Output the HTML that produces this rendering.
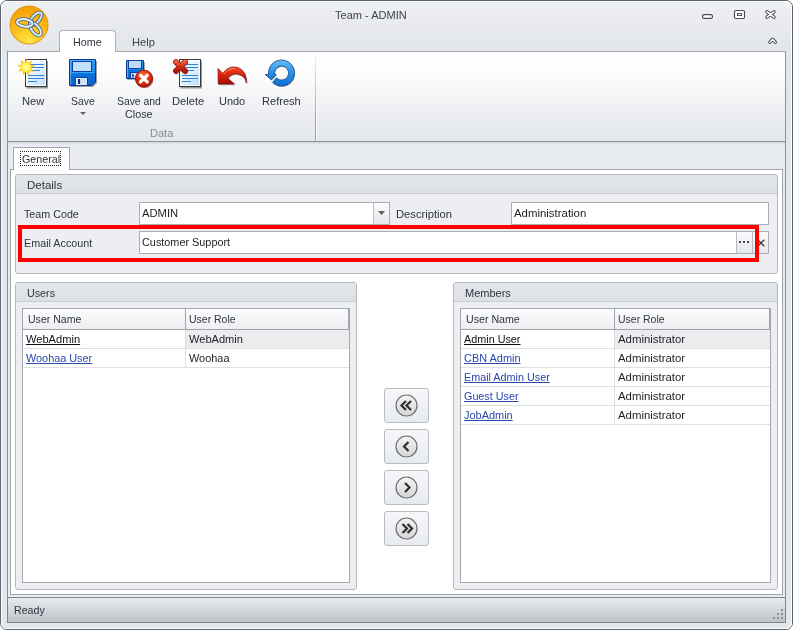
<!DOCTYPE html>
<html><head><meta charset="utf-8"><title>Team - ADMIN</title>
<style>
html,body{margin:0;padding:0;}
body{width:793px;height:630px;position:relative;overflow:hidden;background:#fff;font:11.5px/14px "Liberation Sans",sans-serif;}
div,span,svg{position:absolute;box-sizing:border-box;}
.t{white-space:pre;transform-origin:0 0;font:11.5px/14px "Liberation Sans",sans-serif;text-decoration-thickness:1px;text-underline-offset:1px;}
#win{left:0;top:0;width:793px;height:630px;border:1px solid #5b636e;border-radius:7px;background:linear-gradient(#eff0f2 0,#e9ebee 20px,#e2e5e9 50px,#e3e6ea 100%);}
#winhl{left:1px;top:1px;width:791px;height:628px;border:1px solid #fff;border-radius:6px;}
#frame{left:7px;top:51px;width:779px;height:572px;border:1px solid #8a8f97;border-top:none;background:#e8ebef;}
#ribbon{left:7px;top:51px;width:779px;height:91px;border:1px solid #8d9299;border-top-color:#a4a9b0;background:linear-gradient(#ffffff 0,#fbfbfc 30%,#eceef1 70%,#e4e7eb 100%);}
#ribsh{left:8px;top:142px;width:777px;height:3px;background:linear-gradient(#d4d7dc,#e8ebef);}
#tabhome{left:59px;top:30px;width:57px;height:22px;border:1px solid #adb1b8;border-bottom:none;border-radius:4px 4px 0 0;background:#fff;}
#grpsep{left:315px;top:52px;width:2px;height:89px;background:linear-gradient(90deg,#9a9ea6 0,#9a9ea6 50%,#fff 50%,#fff 100%);-webkit-mask-image:linear-gradient(rgba(0,0,0,0.05),rgba(0,0,0,0.5) 35%,#000 80%);mask-image:linear-gradient(rgba(0,0,0,0.05),rgba(0,0,0,0.5) 35%,#000 80%);}
#status{left:7px;top:597px;width:779px;height:26px;border:1px solid #7f848c;background:linear-gradient(#e9ebee 0,#d8dbdf 40%,#bfc2c7 100%);}
#page{left:10px;top:169px;width:773px;height:426px;border:1px solid #a0a5ac;background:#fff;}
#tabgen{left:13px;top:147px;width:57px;height:23px;border:1px solid #a0a5ac;border-bottom:none;background:#fff;}
#focus{left:20px;top:151px;width:41px;height:15px;border:1px dotted #222;}
.grp{border:1px solid #b3b7be;border-radius:3px;background:#eceef2;}
.grp .hd{left:0;top:0;right:0;height:19px;border-bottom:1px solid #c9ccd2;background:linear-gradient(#e3e6ea,#dcdfe4);border-radius:2px 2px 0 0;}
.inp{border:1px solid #a9adb4;background:#fff;}
.btn{border-left:1px solid #b9bdc3;background:linear-gradient(#fafbfc,#e4e7eb);}
#red{left:18px;top:225px;width:741px;height:37px;border:4px solid #ff0000;}
.grid{border:1px solid #a3a7ae;background:#fff;}
.gh{left:0;top:0;right:0;height:21px;background:linear-gradient(#fbfcfc,#eceef1);border-bottom:1px solid #9ea2a9;}
.row{left:0;right:0;height:19px;border-bottom:1px solid #dcdfe3;}
.vsep{top:21px;width:1px;background:#dcdfe3;}
.hsep{top:0;width:1px;height:21px;background:#9ea2a9;}
.sel{background:#ebecee;}
.mv{left:384px;width:45px;height:35px;border:1px solid #b7bbc2;border-radius:3px;background:linear-gradient(#f6f7f9,#e8ebee);}

</style></head>
<body>
<div id="win"></div>
<div id="winhl"></div>
<div id="frame"></div>
<div id="ribbon"></div>
<div id="ribsh"></div>
<div id="tabhome"></div>
<div id="grpsep"></div>
<div id="status"></div>
<div id="tabgen"></div>
<div id="page"></div>
<div id="tabgen2" style="left:14px;top:169px;width:55px;height:1px;background:#fff"></div>
<div id="focus"></div>

<!-- Details group -->
<div class="grp" style="left:15px;top:174px;width:763px;height:100px"><div class="hd"></div></div>
<div class="inp" style="left:139px;top:202px;width:251px;height:23px"><div class="btn" style="right:0;top:0;width:16px;height:21px"></div></div>
<svg style="left:378px;top:211px" width="7" height="4" viewBox="0 0 7 4"><path d="M0 0H7L3.5 4Z" fill="#5a5f68"/></svg>
<div class="inp" style="left:511px;top:202px;width:258px;height:23px"></div>
<div class="inp" style="left:139px;top:231px;width:630px;height:23px">
  <div class="btn" style="left:596px;top:0;width:16px;height:21px"></div>
  <div class="btn" style="left:612px;top:0;width:16px;height:21px"></div>
</div>
<svg style="left:738px;top:241px" width="11" height="2" viewBox="0 0 11 2"><rect x="1" width="2" height="2" fill="#444"/><rect x="5" width="2" height="2" fill="#444"/><rect x="9" width="2" height="2" fill="#444"/></svg>
<svg style="left:756.8px;top:238.6px" width="8" height="8" viewBox="0 0 8 8"><path d="M0.7 0.7L7.3 7.3M7.3 0.7L0.7 7.3" stroke="#3a3a3a" stroke-width="1.3" fill="none"/></svg>
<div id="red"></div>

<!-- Users group -->
<div class="grp" style="left:15px;top:282px;width:342px;height:308px"><div class="hd"></div></div>
<div class="grid" style="left:22px;top:308px;width:328px;height:275px">
  <div class="gh"></div>
  <div class="row" style="top:21px"><div class="sel" style="left:163px;top:0;right:0;height:18px"></div></div>
  <div class="row" style="top:40px"></div>
  <div class="vsep" style="left:162px;height:38px"></div>
  <div class="hsep" style="left:162px"></div>
  <div class="hsep" style="right:0"></div>
</div>

<!-- Members group -->
<div class="grp" style="left:453px;top:282px;width:325px;height:308px"><div class="hd"></div></div>
<div class="grid" style="left:460px;top:308px;width:311px;height:275px">
  <div class="gh"></div>
  <div class="row" style="top:21px"><div class="sel" style="left:154px;top:0;right:0;height:18px"></div></div>
  <div class="row" style="top:40px"></div>
  <div class="row" style="top:59px"></div>
  <div class="row" style="top:78px"></div>
  <div class="row" style="top:97px"></div>
  <div class="vsep" style="left:153px;height:95px"></div>
  <div class="hsep" style="left:153px"></div>
  <div class="hsep" style="right:0"></div>
</div>

<!-- move buttons -->
<div class="mv" style="top:388px"></div>
<div class="mv" style="top:429px"></div>
<div class="mv" style="top:470px"></div>
<div class="mv" style="top:511px"></div>
<!-- app logo -->
<svg style="left:9px;top:5px" width="40" height="40" viewBox="0 0 40 40">
  <defs>
    <radialGradient id="lg" cx="0.5" cy="0.95" r="0.95"><stop offset="0" stop-color="#ffe848"/><stop offset="0.4" stop-color="#fdc620"/><stop offset="0.8" stop-color="#f8a80c"/><stop offset="1" stop-color="#f49c08"/></radialGradient>
    <linearGradient id="lp" x1="0" y1="0" x2="0" y2="1"><stop offset="0" stop-color="#f4faff"/><stop offset="1" stop-color="#9cc7ee"/></linearGradient>
  </defs>
  <circle cx="20" cy="20" r="19" fill="url(#lg)" stroke="#ea8b14" stroke-width="1"/>
  <g fill="none" transform="translate(22.3,18.8)">
    <ellipse cx="-6.6" cy="0" rx="7.8" ry="3.7" transform="rotate(132)" stroke="#4a617c" stroke-width="3.6"/>
    <ellipse cx="-6.6" cy="0" rx="7.8" ry="3.7" transform="rotate(132)" stroke="#cfe5f8" stroke-width="2"/>
    <ellipse cx="-6.6" cy="0" rx="7.8" ry="3.7" transform="rotate(-128)" stroke="#4a617c" stroke-width="3.6"/>
    <ellipse cx="-6.6" cy="0" rx="7.8" ry="3.7" transform="rotate(-128)" stroke="#d8ebfa" stroke-width="2"/>
    <ellipse cx="-6.6" cy="0" rx="7.8" ry="3.7" transform="rotate(8)" stroke="#4a617c" stroke-width="3.6"/>
    <ellipse cx="-6.6" cy="0" rx="7.8" ry="3.7" transform="rotate(8)" stroke="#e0f0fc" stroke-width="2"/>
  </g>
</svg>

<!-- New -->
<svg style="left:16px;top:56px" width="36" height="34" viewBox="0 0 36 34">
  <defs>
    <linearGradient id="pg" x1="0" y1="0" x2="1" y2="1"><stop offset="0" stop-color="#ffffff"/><stop offset="0.45" stop-color="#e6f3fd"/><stop offset="1" stop-color="#b9dcfa"/></linearGradient>
    <radialGradient id="sun"><stop offset="0" stop-color="#fffcc0"/><stop offset="0.45" stop-color="#fff250"/><stop offset="0.8" stop-color="#fbd020"/><stop offset="1" stop-color="#f5b800"/></radialGradient>
    <filter id="sh" x="-20%" y="-20%" width="150%" height="150%"><feGaussianBlur stdDeviation="0.7"/></filter>
  </defs>
  <rect x="10.5" y="5" width="21.5" height="27.5" fill="#444" opacity="0.55" filter="url(#sh)"/>
  <rect x="9.5" y="3.5" width="21" height="27" fill="url(#pg)" stroke="#3a3a3a" stroke-width="1"/>
  <rect x="10.5" y="4.5" width="19" height="25" fill="none" stroke="#fff" stroke-width="1" opacity="0.8"/>
  <g stroke="#2f86d8" stroke-width="1">
    <path d="M14 8.5H28M14 11.5H28M14 14.5H24M12 19.5H28M12 22.5H28M12 25.5H21"/>
  </g>
  <g transform="translate(0.7,0.6)"><path fill="url(#sun)" stroke="#f2b200" stroke-width="0.4" d="M9.4 2.6L11.0 6.6L14.8 4.4L13.6 8.4L17.8 9.2L14.2 11.4L16.6 15.0L12.6 14.2L12.0 18.6L9.4 15.2L6.6 18.4L6.2 14.0L1.8 14.6L4.6 11.2L1.0 8.8L5.2 8.2L4.2 3.8L7.8 6.4Z"/></g>
</svg>

<!-- Save -->
<svg style="left:66px;top:56px" width="34" height="34" viewBox="0 0 34 34">
  <defs>
    <linearGradient id="fl" x1="0" y1="0" x2="0" y2="1"><stop offset="0" stop-color="#2fa0f6"/><stop offset="0.5" stop-color="#1486ea"/><stop offset="0.55" stop-color="#0a72dc"/><stop offset="1" stop-color="#0a62cc"/></linearGradient>
  </defs>
  <path d="M4.5 5H31V27L27 31H4.5Z" fill="#444" opacity="0.5" filter="url(#sh)"/>
  <path d="M3.5 3.5H29.5V26L26 29.5H3.5Z" fill="url(#fl)" stroke="#0a3392" stroke-width="1"/>
  <path d="M4.5 28.5V4.5H28.5" fill="none" stroke="#5cb8fa" stroke-width="1" opacity="0.8"/>
  <rect x="6.5" y="5.5" width="19" height="10" fill="#c2e0fb" stroke="#0a3fa6" stroke-width="1"/>
  <path d="M5 16.5H28" stroke="#4fb0f8" stroke-width="1" opacity="0.7"/>
  <rect x="9.5" y="21.5" width="12" height="8" fill="#cde4fa" stroke="#0a3fa6" stroke-width="1"/>
  <rect x="10" y="22" width="5" height="7" fill="#f4faff"/>
  <rect x="11.9" y="23" width="2.3" height="5" fill="#0b2a86"/>
</svg>
<svg style="left:80px;top:112px" width="6" height="3" viewBox="0 0 6 3"><path d="M0 0H6L3 3Z" fill="#5a5f68"/></svg>

<!-- Save and Close -->
<svg style="left:122px;top:56px" width="36" height="36" viewBox="0 0 36 36">
  <defs>
    <radialGradient id="rc" cx="0.45" cy="0.3" r="0.75"><stop offset="0" stop-color="#ff6a3a"/><stop offset="0.55" stop-color="#e02c0c"/><stop offset="1" stop-color="#a81004"/></radialGradient>
  </defs>
  <path d="M5.5 6H23V24H5.5Z" fill="#444" opacity="0.45" filter="url(#sh)"/>
  <path d="M4.5 4.5H21.5V22.5H4.5Z" fill="url(#fl)" stroke="#0a3392" stroke-width="1"/>
  <path d="M5.5 21.5V5.5H20.5" fill="none" stroke="#5cb8fa" stroke-width="1" opacity="0.8"/>
  <rect x="6.5" y="4.5" width="13" height="8" fill="#bedcf9" stroke="#0a3fa6" stroke-width="1"/>
  <rect x="8.5" y="16.5" width="9" height="6" fill="#cde4fa" stroke="#0a3fa6" stroke-width="1"/>
  <rect x="10.2" y="18" width="1.4" height="3.6" fill="#0b2a86"/>
  <circle cx="22.6" cy="23.3" r="9" fill="#555" opacity="0.35" filter="url(#sh)"/>
  <circle cx="22" cy="22.7" r="8.6" fill="url(#rc)" stroke="#981408" stroke-width="0.9"/>
  <path d="M18.6 19.3L25.2 25.9M25.2 19.3L18.6 25.9" stroke="#fff" stroke-width="3.3" stroke-linecap="round"/>
</svg>

<!-- Delete -->
<svg style="left:170px;top:56px" width="36" height="34" viewBox="0 0 36 34">
  <defs>
    <linearGradient id="rx" x1="0" y1="0" x2="0" y2="1"><stop offset="0" stop-color="#ee6236"/><stop offset="0.5" stop-color="#d02c14"/><stop offset="1" stop-color="#b01608"/></linearGradient>
  </defs>
  <rect x="10.5" y="5" width="21.5" height="27.5" fill="#444" opacity="0.55" filter="url(#sh)"/>
  <rect x="9.5" y="3.5" width="21" height="27" fill="url(#pg)" stroke="#3a3a3a" stroke-width="1"/>
  <rect x="10.5" y="4.5" width="19" height="25" fill="none" stroke="#fff" stroke-width="1" opacity="0.8"/>
  <g stroke="#2f86d8" stroke-width="1">
    <path d="M16 8.5H28M16 11.5H28M16 14.5H24M12 19.5H28M12 22.5H28M12 25.5H21"/>
  </g>
  <path d="M6 6L15 15M15 6L6 15" stroke="#555" stroke-width="5.6" stroke-linecap="round" opacity="0.3" filter="url(#sh)" transform="translate(0.6,0.8)"/>
  <path d="M5.9 5.9L15.1 15.1M15.1 5.9L5.9 15.1" stroke="#8e1208" stroke-width="5.7" stroke-linecap="round"/>
  <path d="M5.9 5.9L15.1 15.1M15.1 5.9L5.9 15.1" stroke="url(#rx)" stroke-width="4.3" stroke-linecap="round"/>
</svg>

<!-- Undo -->
<svg style="left:216px;top:56px" width="34" height="34" viewBox="0 0 34 34">
  <defs>
    <linearGradient id="un" x1="0" y1="0" x2="0" y2="1"><stop offset="0" stop-color="#f64a28"/><stop offset="0.45" stop-color="#e02408"/><stop offset="1" stop-color="#a00c04"/></linearGradient>
  </defs>
  <path d="M2 12.5L2.2 28H18.5L11.5 22C15 17.2 22 16 27.5 21C29.5 23 30.3 25.5 30.6 28C31.5 18 26 11 18 11C13 11 9.5 13.5 7 17.5Z" fill="#333" opacity="0.45" filter="url(#sh)" transform="translate(0.8,1.2)"/>
  <path d="M2 12.5L2.2 28H18.5L11.5 22C15 17.2 22 16 27.5 21C29.5 23 30 25 30.2 27C31 18 26 11 18 11C13 11 9.5 13.5 7 17.5Z" fill="url(#un)" stroke="#7e0a04" stroke-width="0.7"/>
  <path d="M8 18.2C11 13.6 15 12.2 19 12.4" fill="none" stroke="#ffb090" stroke-width="0.8" opacity="0.8"/>
</svg>

<!-- Refresh -->
<svg style="left:263px;top:56px" width="36" height="34" viewBox="0 0 36 34">
  <defs>
    <linearGradient id="rf" x1="0" y1="0" x2="0" y2="1"><stop offset="0" stop-color="#6cc0f8"/><stop offset="0.45" stop-color="#2a94ea"/><stop offset="1" stop-color="#0c70d2"/></linearGradient>
  </defs>
  <path d="M5.6 18.5A13 13 0 1 1 9.63 26.51L13.46 21.86A7 7 0 1 0 11.66 18.5L13.2 18.5L8.2 23.7L2.4 18.5Z" fill="#333" opacity="0.35" filter="url(#sh)" transform="translate(0.7,1)"/>
  <path d="M5.6 18.5A13 13 0 1 1 9.63 26.51L13.46 21.86A7 7 0 1 0 11.66 18.5L13.2 18.5L8.2 23.7L2.4 18.5Z" fill="url(#rf)" stroke="#1a4c90" stroke-width="0.9" stroke-linejoin="round"/>
</svg>

<!-- window buttons -->
<svg style="left:700px;top:8px" width="82" height="14" viewBox="0 0 82 14">
  <rect x="2.6" y="6.6" width="9.8" height="3.8" rx="1.5" fill="#fff" stroke="#4a4f57" stroke-width="1.2"/>
  <rect x="34.5" y="2.5" width="10" height="8" rx="1.2" fill="#fff" stroke="#4a4f57" stroke-width="1.2"/>
  <rect x="37.5" y="5.5" width="4" height="2" fill="#fff" stroke="#4a4f57" stroke-width="1"/>
  <path d="M67 3.9L74 9.1M74 3.9L67 9.1" stroke="#4a4f57" stroke-width="3.5" stroke-linecap="round"/>
  <path d="M67 3.9L74 9.1M74 3.9L67 9.1" stroke="#fff" stroke-width="1.5" stroke-linecap="round"/>
</svg>
<svg style="left:766px;top:35px" width="13" height="11" viewBox="0 0 13 11">
  <path d="M3.9 7.2L6.6 4.2L9.3 7.2" stroke="#4a4f57" stroke-width="3.4" stroke-linecap="round" stroke-linejoin="round" fill="none"/>
  <path d="M3.9 7.2L6.6 4.2L9.3 7.2" stroke="#fff" stroke-width="1.3" stroke-linecap="round" stroke-linejoin="round" fill="none"/>
</svg>

<!-- status grip -->
<svg style="left:772px;top:608px" width="12" height="12" viewBox="0 0 12 12">
  <g fill="#8a8f97"><rect x="9" y="1" width="2" height="2"/><rect x="5" y="5" width="2" height="2"/><rect x="9" y="5" width="2" height="2"/><rect x="1" y="9" width="2" height="2"/><rect x="5" y="9" width="2" height="2"/><rect x="9" y="9" width="2" height="2"/></g>
</svg>

<!-- move icons -->
<svg style="left:394px;top:393px" width="26" height="150" viewBox="0 0 26 150">
  <defs><linearGradient id="cg" x1="0" y1="0" x2="0" y2="1"><stop offset="0" stop-color="#f4f4f4"/><stop offset="1" stop-color="#d6d6d6"/></linearGradient></defs>
  <g fill="url(#cg)" stroke="#6f6f6f" stroke-width="1.2">
    <circle cx="12.5" cy="12.5" r="10.5"/><circle cx="12.5" cy="53.5" r="10.5"/><circle cx="12.5" cy="94.5" r="10.5"/><circle cx="12.5" cy="135.5" r="10.5"/>
  </g>
  <g fill="none" stroke="#2e2e2e" stroke-width="2.2">
    <path d="M12 8L7.5 12.5L12 17M17 8L12.5 12.5L17 17"/>
    <path d="M14.5 49L10 53.5L14.5 58"/>
    <path d="M11 90L15.5 94.5L11 99"/>
    <path d="M8.5 131L13 135.5L8.5 140M13.5 131L18 135.5L13.5 140"/>
  </g>
</svg>

<span class="t" style="left:334.6px;top:7.7px;color:#3e4450;transform:scaleX(0.959);">Team - ADMIN</span>
<span class="t" style="left:73.0px;top:34.5px;color:#2e3440;transform:scaleX(0.935);">Home</span>
<span class="t" style="left:132.1px;top:34.5px;color:#3e4450;transform:scaleX(0.968);">Help</span>
<span class="t" style="left:22.1px;top:93.5px;color:#30343f;transform:scaleX(0.973);">New</span>
<span class="t" style="left:70.7px;top:93.5px;color:#30343f;transform:scaleX(0.904);">Save</span>
<span class="t" style="left:116.8px;top:93.5px;color:#30343f;transform:scaleX(0.901);">Save and</span>
<span class="t" style="left:124.9px;top:106.5px;color:#30343f;transform:scaleX(0.935);">Close</span>
<span class="t" style="left:172.2px;top:93.5px;color:#30343f;transform:scaleX(0.971);">Delete</span>
<span class="t" style="left:219.0px;top:93.5px;color:#30343f;transform:scaleX(0.953);">Undo</span>
<span class="t" style="left:262.2px;top:93.5px;color:#30343f;transform:scaleX(0.963);">Refresh</span>
<span class="t" style="left:150.1px;top:125.7px;color:#878c9a;transform:scaleX(0.959);">Data</span>
<span class="t" style="left:22.1px;top:152.3px;color:#30343f;transform:scaleX(0.931);">General</span>
<span class="t" style="left:26.8px;top:178.4px;color:#30343f;transform:scaleX(1.001);">Details</span>
<span class="t" style="left:23.9px;top:206.9px;color:#30343f;transform:scaleX(0.932);">Team Code</span>
<span class="t" style="left:23.9px;top:235.8px;color:#30343f;transform:scaleX(0.937);">Email Account</span>
<span class="t" style="left:141.9px;top:205.6px;color:#1e1e24;transform:scaleX(0.974);">ADMIN</span>
<span class="t" style="left:141.9px;top:234.7px;color:#1e1e24;transform:scaleX(0.944);">Customer Support</span>
<span class="t" style="left:396.1px;top:206.7px;color:#30343f;transform:scaleX(0.975);">Description</span>
<span class="t" style="left:513.9px;top:205.6px;color:#1e1e24;transform:scaleX(0.992);">Administration</span>
<span class="t" style="left:27.0px;top:286.4px;color:#30343f;transform:scaleX(0.932);">Users</span>
<span class="t" style="left:464.9px;top:286.4px;color:#30343f;transform:scaleX(0.957);">Members</span>
<span class="t" style="left:28.2px;top:311.6px;color:#30343f;transform:scaleX(0.918);">User Name</span>
<span class="t" style="left:189.0px;top:311.6px;color:#30343f;transform:scaleX(0.911);">User Role</span>
<span class="t" style="left:26.4px;top:331.5px;color:#101014;transform:scaleX(0.965);text-decoration:underline;">WebAdmin</span>
<span class="t" style="left:26.4px;top:350.5px;color:#2848ae;transform:scaleX(0.944);text-decoration:underline;">Woohaa User</span>
<span class="t" style="left:189.0px;top:331.5px;color:#1e1e24;transform:scaleX(0.962);">WebAdmin</span>
<span class="t" style="left:189.0px;top:350.5px;color:#1e1e24;transform:scaleX(0.950);">Woohaa</span>
<span class="t" style="left:465.8px;top:311.6px;color:#30343f;transform:scaleX(0.925);">User Name</span>
<span class="t" style="left:618.1px;top:311.6px;color:#30343f;transform:scaleX(0.911);">User Role</span>
<span class="t" style="left:463.7px;top:331.5px;color:#101014;transform:scaleX(0.940);text-decoration:underline;">Admin User</span>
<span class="t" style="left:463.7px;top:350.5px;color:#2848ae;transform:scaleX(0.951);text-decoration:underline;">CBN Admin</span>
<span class="t" style="left:463.7px;top:369.5px;color:#2848ae;transform:scaleX(0.938);text-decoration:underline;">Email Admin User</span>
<span class="t" style="left:463.7px;top:388.5px;color:#2848ae;transform:scaleX(0.937);text-decoration:underline;">Guest User</span>
<span class="t" style="left:463.7px;top:407.5px;color:#2848ae;transform:scaleX(0.952);text-decoration:underline;">JobAdmin</span>
<span class="t" style="left:618.1px;top:331.5px;color:#1e1e24;transform:scaleX(0.990);">Administrator</span>
<span class="t" style="left:618.1px;top:350.5px;color:#1e1e24;transform:scaleX(0.990);">Administrator</span>
<span class="t" style="left:618.1px;top:369.5px;color:#1e1e24;transform:scaleX(0.990);">Administrator</span>
<span class="t" style="left:618.1px;top:388.5px;color:#1e1e24;transform:scaleX(0.990);">Administrator</span>
<span class="t" style="left:618.1px;top:407.5px;color:#1e1e24;transform:scaleX(0.990);">Administrator</span>
<span class="t" style="left:13.8px;top:603.3px;color:#30343f;transform:scaleX(0.923);">Ready</span>
</body></html>
